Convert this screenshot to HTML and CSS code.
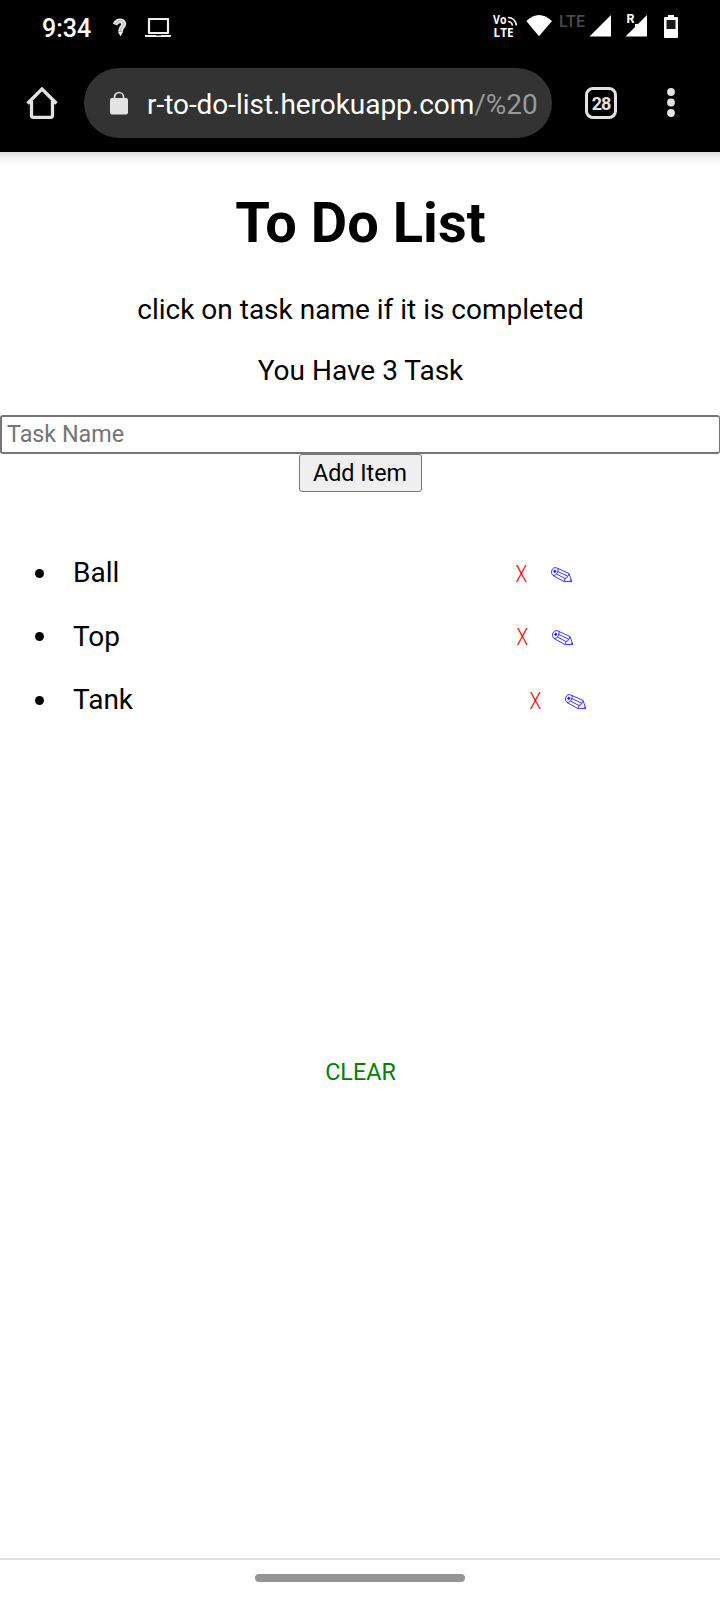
FILE: index.html
```html
<!DOCTYPE html>
<html lang="en">
<head>
<meta charset="utf-8">
<title>To Do List</title>
<link rel="stylesheet" href="styles.css">
</head>
<body>
<svg width="0" height="0" class="defs"><defs>
  <g id="pencil" fill="none" stroke="#22f" stroke-width=".9" stroke-linejoin="round">
    <path d="M3 .8Q5 .2 7 1.500L18 6.500L20.800 14.700L12.500 14.300L2 8.500Q0 7 .6 4Q1.200 1.500 3 .8zM7 1.500Q7.500 3.500 6 6.500Q4.500 8.500 2 8.500M6.700 4.500L16.500 9M5.500 7L14 11.500M18 6.500Q18 9 16.500 9Q16.500 11.500 14 11.500Q14 14 12.500 14.300M18.500 14.500L20 12.500"/>
    <circle cx="3.800" cy="4.300" r="1.100" fill="#00f"/>
  </g>
</defs></svg>
<header class="chrome">
  <div class="status">
    <span class="clock">9:34</span>
    <svg class="assist" width="16" height="20" viewBox="0 0 16 20"><path d="M2 6.500C4 1.500 10.500 2 10.800 5.500C11 8.500 7.800 8.500 7.500 13.500" fill="none" stroke="#e4e4e4" stroke-width="4.800"/><path d="M4.800 13.500h5.500l-2.800 5z" fill="#eee"/><path d="M2 6.500C4 1.500 10.500 2 10.800 5.500C11 8.500 7.800 8.500 7.500 13.500" fill="none" stroke="#999" stroke-width=".7"/></svg>
    <svg class="laptop" width="26" height="20" viewBox="0 0 26 20"><path d="M4 1h19v14H4z" fill="none" stroke="#f1f1ed" stroke-width="2.200" stroke-linejoin="round"/><path d="M0 17h26v1.300q0 .7-.7.7H.7q-.7 0-.7-.7z" fill="#f1f1ed"/><path d="M11 17.500h5" stroke="#777"/></svg>
    <div class="signals">
      <svg width="206" height="28" viewBox="0 0 206 28">
        <g fill="#fff">
          <text class="volte" x="0" y="12" textLength="13.500" lengthAdjust="spacingAndGlyphs">Vo</text>
          <text class="volte" x="0.500" y="24.500" textLength="20" lengthAdjust="spacingAndGlyphs">LTE</text>
          <path d="M15 5.500q7 0 8.500 8M15 9.500q3.500 0 4.500 4" fill="none" stroke="#fff" stroke-width="1.500"/>
          <path d="M33.300 9Q46-3 59 9L46 24.300z"/>
          <path d="M96.500 24.500L118 3v21.500z"/>
          <path d="M132.500 24.500l9.500-9.500v-3h3L154 3v21.500z"/>
          <text class="roam" x="133.500" y="10.500">R</text>
          <path d="M175 3h6v2h3q1 0 1 1v19q0 1-1 1h-12q-1 0-1-1V6q0-1 1-1h3z"/>
        </g>
        <path d="M173.500 8h9v9h-9z" fill="#1a1a1a"/>
        <text class="lte" x="66" y="14.500" textLength="26">LTE</text>
      </svg>
    </div>
  </div>
  <div class="toolbar">
    <svg class="home" width="32" height="32" viewBox="0 0 32 32"><path d="M1.500 16.500L16 2l14.500 14.500M5.500 14v14.500q0 1.800 1.800 1.800h17.400q1.800 0 1.800-1.800V14" fill="none" stroke="#e3e3e3" stroke-width="3.300"/></svg>
    <div class="address">
      <svg width="18" height="24" viewBox="0 0 18 24"><path d="M4.500 9V6a4.500 4.500 0 0 1 9 0v3" fill="none" stroke="#e3e3e3" stroke-width="1.700"/><rect y="7" width="18" height="16.500" rx="2" fill="#e3e3e3"/></svg>
      <span class="url">r-to-do-list.herokuapp.com<span class="path">/%20</span></span>
    </div>
    <span class="tabs">28</span>
    <svg class="menu" width="8" height="30" viewBox="0 0 8 30"><g fill="#e3e3e3"><circle cx="4" cy="5" r="3.900"/><circle cx="4" cy="15.500" r="3.900"/><circle cx="4" cy="26" r="3.900"/></g></svg>
  </div>
</header>
<main class="page">
  <h1 class="title">To Do List</h1>
  <p class="note">click on task name if it is completed</p>
  <p class="note">You Have 3 Task</p>
  <input class="task-input" type="text" placeholder="Task Name">
  <button class="add">Add Item</button>
  <ul class="tasks">
    <li class="task"><i class="dot"></i><span class="name">Ball</span><span class="remove">X</span><svg class="pencil" width="22" height="17" viewBox="0 0 22 17"><use href="#pencil"/></svg></li>
    <li class="task"><i class="dot"></i><span class="name">Top</span><span class="remove shift-top">X</span><svg class="pencil" width="22" height="17" viewBox="0 0 22 17"><use href="#pencil"/></svg></li>
    <li class="task"><i class="dot"></i><span class="name">Tank</span><span class="remove shift-tank">X</span><svg class="pencil" width="22" height="17" viewBox="0 0 22 17"><use href="#pencil"/></svg></li>
  </ul>
  <div class="clear">CLEAR</div>
</main>
<footer class="nav"><div class="handle"></div></footer>
</body>
</html>
```
FILE: styles.css
```css
* { box-sizing: border-box; }
body {
  margin: 0;
  width: 720px;
  height: 1600px;
  display: flex;
  flex-direction: column;
  overflow: hidden;
  background: #fff;
  color: #000;
  font: 28px/33px Roboto, sans-serif;
}
svg { display: block; flex: none; }
.defs { height: 0; }
.chrome { height: 152px; flex: none; background: #000; }
.status { height: 54px; display: flex; padding-left: 42px; }
.clock { width: 71px; padding-top: 12px; color: #fff; font-size: 25px; font-weight: 500; }
.assist { margin-top: 18px; }
.laptop { margin: 18px 0 0 16px; }
.signals { margin: 12px 0 0 auto; padding-right: 21px; }
.volte { font: 700 11.500px "Open Sans", sans-serif; }
.roam { font: 700 12.500px Roboto, sans-serif; }
.lte { font: 500 16px Roboto, sans-serif; fill: #4c4c4c; }
.toolbar { height: 98px; display: flex; padding-top: 14px; }
.home { margin: 19px 0 0 26px; }
.address {
  width: 468px;
  height: 70px;
  margin-left: 26px;
  padding: 0 0 0 26px;
  display: flex;
  align-items: center;
  border-radius: 35px;
  background: #333;
}
.url { padding: 2px 0 0 19px; white-space: nowrap; color: #fff; font-size: 28px; letter-spacing: -.04px; }
.path { color: #999; }
.tabs {
  width: 32px;
  height: 32px;
  margin: 19px 0 0 33px;
  border: 3px solid #e3e3e3;
  border-radius: 8px;
  color: #e3e3e3;
  font: 700 18px/27px Roboto, sans-serif;
  letter-spacing: -1px;
  text-align: center;
}
.menu { margin: 19px 0 0 50px; }
.page {
  flex: 1;
  display: flex;
  flex-direction: column;
  align-items: center;
  padding-top: 37.500px;
  background: linear-gradient(#dcdcdc, #f5f5f5 7px, #fff 14px) top / 100% 14px no-repeat;
}
.title { margin: 0 0 37.500px; font-size: 56px; line-height: 66px; font-weight: 700; padding-left: 1px; }
.note { margin: 0 0 28px; padding-left: 1px; }
.task-input {
  width: 720px;
  height: 39px;
  padding: 0 5px 2px;
  border: 2px solid #767676;
  border-right-width: 1px;
  border-radius: 3px;
  background: #fff;
  font: 23.330px Roboto, sans-serif;
}
.task-input::placeholder { color: #757575; opacity: 1; }
.add {
  width: 123px;
  height: 38px;
  padding: 0;
  border: 1.500px solid #767676;
  border-radius: 3px;
  background: #efefef;
  color: #000;
  font: 23.330px Roboto, sans-serif;
}
.tasks { width: 100%; margin: 0; padding: 49px 0 0; list-style: none; }
.task { height: 63.500px; display: flex; align-items: center; padding-left: 35px; }
.dot { width: 9px; height: 9px; margin-top: 1px; border-radius: 50%; background: #000; }
.name { width: 443px; padding-left: 29px; }
.remove {
  width: 14px;
  margin-left: 27px;
  color: #f00;
  font-size: 24px;
  font-weight: 300;
  transform: scaleX(.8);
  padding-top: 3px;
}
.shift-top { margin-left: 28px; }
.shift-tank { margin-left: 41px; }
.pencil { margin: 5px 0 0 23px; }
.clear { margin-top: 324px; padding-left: 1px; color: #008000; font-size: 23.330px; }
.nav { height: 42px; flex: none; padding-top: 14px; border-top: 2px solid #e0e0e0; }
.handle { width: 210px; height: 8px; margin: 0 auto; border-radius: 4px; background: #949494; }
```
